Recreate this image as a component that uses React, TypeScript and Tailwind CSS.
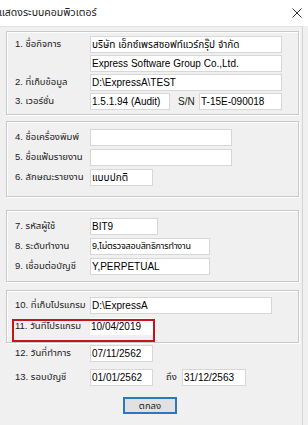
import type { ReactNode } from "react";

const FONT = "font-['Liberation_Sans','Noto_Sans_Thai','Noto_Sans','DejaVu_Sans',sans-serif]";

function Field({ w, size = "text-[10px]", children }: { w: string; size?: string; children?: ReactNode }) {
  return (
    <div
      className={`${w} ${size} h-[17px] bg-white border border-[#d7d7d7] px-[1px] leading-[15px] text-black whitespace-nowrap overflow-hidden`}
    >
      {children}
    </div>
  );
}

function Row({
  label,
  children,
  gap = "mt-[2px]",
}: {
  label?: string;
  children: ReactNode;
  gap?: string;
}) {
  return (
    <div className={`flex items-center ${gap}`}>
      <div className="w-[75px] text-[9.5px] text-[#1a1a1a] whitespace-nowrap">{label}</div>
      {children}
    </div>
  );
}

function Group({ className, children }: { className: string; children: ReactNode }) {
  return (
    <div
      className={`border border-[#c9c9c9] shadow-[inset_1px_1px_0_#ffffff,1px_1px_0_#ffffff] pl-[8px] ${className}`}
    >
      {children}
    </div>
  );
}

export default function App() {
  return (
    <div className={`w-[308px] h-[425px] bg-[#f0f0f0] ${FONT} overflow-hidden`}>
      {/* Title bar */}
      <div className="h-[26px] bg-white flex items-center justify-between pr-[6px]">
        <span className="text-[10.5px] text-[#222] -ml-[1px]">แสดงระบบคอมพิวเตอร์</span>
        <svg viewBox="0 0 10 10" className="w-[10px] h-[10px]" stroke="#333" strokeWidth="1">
          <path d="M0.5 0.5 L9.5 9.5 M9.5 0.5 L0.5 9.5" />
        </svg>
      </div>

      <div className="h-[399px] border-t border-[#e2e2e2] border-r border-r-[#d4d4d4] w-[303px] pl-[6px] pr-[3px] pt-[4px]">
        <Group className="pt-[4px] pb-[4px]">
          <Row label="1. ชื่อกิจการ" gap="">
            <Field w="w-[192px]">บริษัท เอ็กซ์เพรสซอฟท์แวร์กรุ๊ป จำกัด</Field>
          </Row>
          <Row>
            <Field w="w-[192px]">Express Software Group Co.,Ltd.</Field>
          </Row>
          <Row label="2. ที่เก็บข้อมูล">
            <Field w="w-[192px]">D:\ExpressA\TEST</Field>
          </Row>
          <Row label="3. เวอร์ชั่น">
            <Field w="w-[80px]">1.5.1.94 (Audit)</Field>
            <span className="w-[29px] pl-[8px] text-[10px] text-[#1a1a1a]">S/N</span>
            <Field w="w-[83px]">T-15E-090018</Field>
          </Row>
        </Group>

        <Group className="mt-[6px] pt-[7px] pb-[10px]">
          <Row label="4. ชื่อเครื่องพิมพ์" gap="">
            <Field w="w-[142px]" />
          </Row>
          <Row label="5. ชื่อแฟ้มรายงาน" gap="mt-[3px]">
            <Field w="w-[142px]" />
          </Row>
          <Row label="6. ลักษณะรายงาน" gap="mt-[3px]">
            <Field w="w-[63px]">แบบปกติ</Field>
          </Row>
        </Group>

        <Group className="mt-[13px] pt-[7px] pb-[6px]">
          <Row label="7. รหัสผู้ใช้" gap="">
            <Field w="w-[68px]">BIT9</Field>
          </Row>
          <Row label="8. ระดับทำงาน" gap="mt-[3px]">
            <Field w="w-[120px]" size="text-[9px] tracking-[-0.2px]">9,ไม่ตรวจสอบสิทธิการทำงาน</Field>
          </Row>
          <Row label="9. เชื่อมต่อบัญชี" gap="mt-[3px]">
            <Field w="w-[120px]">Y,PERPETUAL</Field>
          </Row>
        </Group>

        <Group className="mt-[8px] pt-[6px] pb-[7px]">
          <Row label="10. ที่เก็บโปรแกรม" gap="">
            <Field w="w-[182px]">D:\ExpressA</Field>
          </Row>
          <div className="relative">
            <Row label="11. วันที่โปรแกรม" gap="mt-[4px]">
              <div className="w-[64px] h-[17px] bg-white text-[10px] leading-[17px] px-[1px]">10/04/2019</div>
            </Row>
            {/* red highlight annotation */}
            <div className="absolute left-[-3px] top-[1px] w-[143px] h-[23px] border-2 border-[#c5141c]" />
          </div>
        </Group>

        <div className="pl-[9px]">
          <Row label="12. วันที่ทำการ" gap="mt-[2px]">
            <Field w="w-[63px]">07/11/2562</Field>
          </Row>
          <Row label="13. รอบบัญชี" gap="mt-[7px]">
            <Field w="w-[63px]">01/01/2562</Field>
            <span className="w-[29px] pl-[13px] text-[9.5px] text-[#1a1a1a]">ถึง</span>
            <Field w="w-[64px]">31/12/2563</Field>
          </Row>
        </div>

        <div className="flex justify-center mt-[11px] pr-[5px]">
          <button className="w-[54px] h-[17px] border-2 border-[#2b77c5] bg-[#e1e1e1] text-[9.5px] leading-[12px] text-[#222]">
            ตกลง
          </button>
        </div>
      </div>
    </div>
  );
}
